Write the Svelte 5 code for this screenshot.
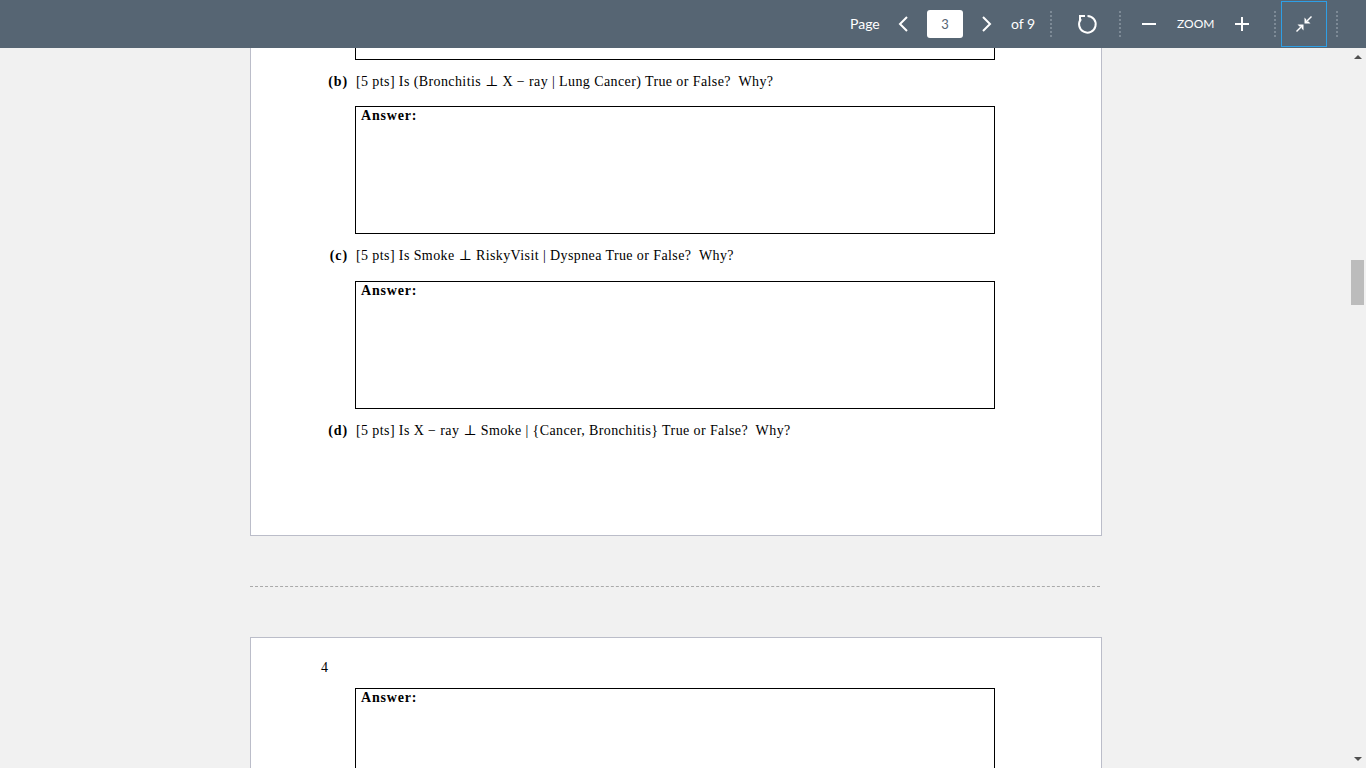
<script>
    const questions = [
        { label: "(b)", text: "[5 pts] Is (Bronchitis ⊥ X − ray | Lung Cancer) True or False?  Why?" },
        { label: "(c)", text: "[5 pts] Is Smoke ⊥ RiskyVisit | Dyspnea True or False?  Why?" }
    ];
</script>

<div class="viewer">
    <header class="toolbar">
        <span class="page-label">Page</span>
        <button class="icon prev" aria-label="Previous page">
            <svg width="12" height="18" viewBox="0 0 12 18"><path d="M10 2 3 9l7 7" /></svg>
        </button>
        <div class="page-input">3</div>
        <button class="icon next" aria-label="Next page">
            <svg width="12" height="18" viewBox="0 0 12 18"><path d="m2 2 7 7-7 7" /></svg>
        </button>
        <span class="page-count">of 9</span>
        <span class="sep first"></span>
        <button class="icon rotate" aria-label="Rotate">
            <svg width="22" height="22" viewBox="0 0 22 22">
                <path d="M11.5 3a8.3 8.3 0 1 1-6.5 3" />
                <path d="M4 8V3h5" />
            </svg>
        </button>
        <span class="sep second"></span>
        <button class="icon minus" aria-label="Zoom out">
            <svg width="16" height="16" viewBox="0 0 16 16"><path d="M1 8h14" /></svg>
        </button>
        <span class="zoom-label">ZOOM</span>
        <button class="icon plus" aria-label="Zoom in">
            <svg width="16" height="16" viewBox="0 0 16 16"><path d="M1 8h14M8 1v14" /></svg>
        </button>
        <span class="sep third"></span>
        <button class="icon collapse" aria-label="Exit fullscreen">
            <svg width="18" height="18" viewBox="0 0 18 18">
                <path class="thin" d="m10.5 7.5 6-6" />
                <path class="solid" d="M9.5 2.5v6h6l-2-2h-2.2v-2z" />
                <path class="thin" d="m7.5 10.5-6 6" />
                <path class="solid" d="M8.5 15.5v-6h-6l2 2h2.2v2z" />
            </svg>
        </button>
        <span class="sep last"></span>
    </header>

    <div class="body">
        <main class="pages">
            <section class="page current">
                <div class="answer-end"></div>
                {#each questions as q}
                    <p class="question"><b>{q.label}</b><span>{q.text}</span></p>
                    <div class="answer"><b>Answer:</b></div>
                {/each}
                <p class="question"><b>(d)</b><span>[5 pts] Is X − ray ⊥ Smoke | &#123;Cancer, Bronchitis&#125; True or False?  Why?</span></p>
            </section>

            <div class="divider"></div>

            <section class="page next-page">
                <p class="page-number">4</p>
                <div class="answer"><b>Answer:</b></div>
            </section>
        </main>

        <aside class="scrollbar">
            <span class="arrow up"></span>
            <span class="thumb"></span>
            <span class="arrow down"></span>
        </aside>
    </div>
</div>

<style>
    :global(body) {
        margin: 0;
        overflow: hidden;
        background: #f1f1f1;
    }
    .viewer {
        height: 100vh;
        display: flex;
        flex-direction: column;
        overflow: hidden;
    }
    .toolbar {
        flex: none;
        height: 48px;
        box-sizing: border-box;
        display: flex;
        align-items: center;
        background: #566573;
        color: #fff;
        font-family: Lato, sans-serif;
        font-size: 14px;
        white-space: nowrap;
    }
    .icon {
        flex: none;
        display: flex;
        align-items: center;
        justify-content: center;
        padding: 0;
        border: 0;
        background: none;
    }
    .icon svg {
        display: block;
    }
    .icon path {
        fill: none;
        stroke: #fff;
        stroke-width: 2;
    }
    .icon path.solid {
        fill: #fff;
        stroke: none;
    }
    .icon path.thin {
        stroke-width: 1.5;
    }
    .page-label {
        margin-left: 850px;
        width: 30px;
        padding-bottom: 2px;
    }
    .prev {
        margin-left: 17px;
        width: 12px;
    }
    .page-input {
        margin-left: 18px;
        width: 36px;
        height: 28px;
        line-height: 28px;
        text-align: center;
        background: #fff;
        color: #566573;
        border-radius: 3px;
        font-size: 13px;
    }
    .next {
        margin-left: 18px;
        width: 12px;
    }
    .page-count {
        margin-left: 18px;
        width: 24px;
        padding-bottom: 2px;
    }
    .sep {
        flex: none;
        width: 0;
        height: 26px;
        border-left: 2px dotted #7d8a96;
    }
    .sep.first {
        margin-left: 15px;
    }
    .rotate {
        margin-left: 24px;
        width: 22px;
    }
    .sep.second {
        margin-left: 21px;
    }
    .minus {
        margin-left: 20px;
        width: 16px;
    }
    .zoom-label {
        margin-left: 20px;
        width: 37px;
        font-size: 12px;
        padding-bottom: 2px;
    }
    .plus {
        margin-left: 20px;
        width: 16px;
    }
    .sep.third {
        margin-left: 24px;
    }
    .collapse {
        margin-left: 5px;
        width: 46px;
        height: 46px;
        box-sizing: border-box;
        border: 1px solid #2e9fe6;
    }
    .sep.last {
        margin-left: 9px;
    }
    .body {
        flex: 1;
        min-height: 0;
        display: flex;
        overflow: hidden;
    }
    .pages {
        flex: 1;
        min-width: 0;
        padding-left: 250px;
    }
    .page {
        width: 852px;
        box-sizing: border-box;
        padding-left: 71px;
        background: #fff;
        border: 1px solid #bbbdc9;
        font-family: "Liberation Serif", "DejaVu Serif", serif;
        font-size: 14px;
        letter-spacing: 0.4px;
        color: #000;
    }
    .page.current {
        height: 488px;
        border-top: 0;
    }
    .next-page {
        height: 200px;
    }
    .answer-end {
        margin-left: 33px;
        width: 640px;
        height: 12px;
        box-sizing: border-box;
        border: 1px solid #000;
        border-top: 0;
    }
    .question {
        margin: 13px 0 16px;
        height: 17px;
        line-height: 17px;
        display: flex;
        white-space: pre;
    }
    .answer + .question {
        margin-bottom: 17px;
    }
    .question b {
        width: 26px;
        margin-right: 8px;
        text-align: right;
        letter-spacing: 0.9px;
    }
    .answer {
        margin-left: 33px;
        width: 640px;
        height: 128px;
        box-sizing: border-box;
        border: 1px solid #000;
        padding: 1px 5px;
        line-height: 15px;
    }
    .answer b {
        letter-spacing: 0.8px;
    }
    .divider {
        width: 850px;
        margin: 50px 0;
        border-top: 1px dashed #aaa;
    }
    .page-number {
        margin: 21px 0 12px -1px;
        line-height: 17px;
    }
    .scrollbar {
        flex: none;
        width: 17px;
        box-sizing: border-box;
        padding-top: 7px;
        display: flex;
        flex-direction: column;
        align-items: center;
        background: #f1f1f1;
    }
    .arrow {
        width: 0;
        height: 0;
        border-left: 4px solid transparent;
        border-right: 4px solid transparent;
    }
    .arrow.up {
        border-bottom: 4px solid #505050;
    }
    .arrow.down {
        margin-top: 452px;
        border-top: 4px solid #505050;
    }
    .thumb {
        margin-top: 201px;
        width: 13px;
        height: 45px;
        background: #bcbcbc;
    }
</style>
